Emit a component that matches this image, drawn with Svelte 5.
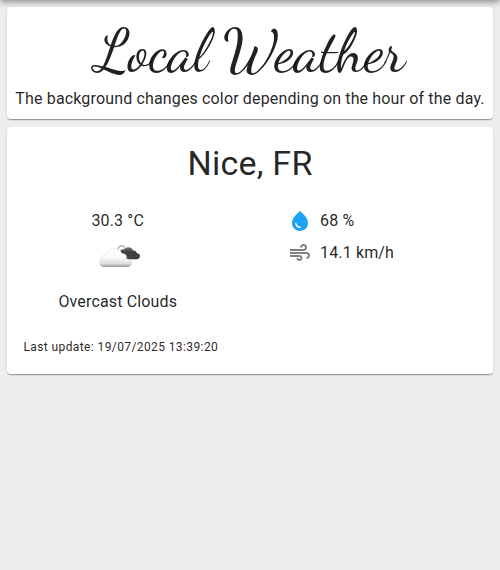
<script>
  const city = 'Nice, FR';
  const updated = '19/07/2025 13:39:20';
</script>

<div class="page">
  <div class="bar"></div>
  <section class="card header">
    <h1>Local Weather</h1>
    <p>The background changes color depending on the hour of the day.</p>
  </section>
  <section class="card weather">
    <h2>{city}</h2>
    <div class="grid">
      <div class="sky">
        <span>30.3 °C</span>
        <svg class="cloud" width="50" height="50" viewBox="0 0 50 50">
          <defs>
            <linearGradient id="light" x1="0" y1="0" x2="0" y2="1">
              <stop offset="0" stop-color="#fff" />
              <stop offset=".5" stop-color="#fafafa" />
              <stop offset=".84" stop-color="#dcdcdc" />
              <stop offset="1" stop-color="#888" />
            </linearGradient>
            <linearGradient id="dark" x1="0" y1="0" x2="0" y2="1">
              <stop offset="0" stop-color="#777" />
              <stop offset=".4" stop-color="#3c3c3c" />
              <stop offset=".8" stop-color="#444" />
              <stop offset="1" stop-color="#333" />
            </linearGradient>
          </defs>
          <path d="M25 19c0-2.800 1.800-4.300 3.700-4.300 1.600 0 2.600.8 3.200 1.800" fill="none" stroke="#999" stroke-width="1.100" />
          <path d="M29 27.500c-2-3-3-5-2-7 .7-2 2.600-2.500 4-2 1.500-3.200 8-3 9 1 2-.4 3.600.6 3.600 2.600 3 .4 4 2.200 3.200 4-.4 1.700-1.800 2.200-3.500 2.200H33z" fill="url(#dark)" />
          <path d="M12 36c-3.500 0-5.500-1.500-5.500-4.100s1.500-4.200 3.400-4.500c-1-3.200 1.200-5.200 3.900-4.700 1.200-3.600 4.200-5.600 7.500-5.400 3.800.2 6.700 2.400 7.600 5.300 3.400-.5 5.300 2.100 4.500 5.100 3 .2 5.200 1.800 5.200 4.200 0 2.600-2 4.100-5 4.100z" fill="url(#light)" stroke="#d2d2d2" stroke-width=".4" />
        </svg>
        <span class="label">Overcast Clouds</span>
      </div>
      <div class="stats">
        <div class="row">
          <svg width="24" height="24" viewBox="0 0 24 24" fill="#1da1f2"><path d="M12 2c-5.330 4.550-8 8.480-8 11.800 0 4.980 3.800 8.200 8 8.200s8-3.220 8-8.200c0-3.320-2.670-7.250-8-11.800zM7.830 14c.37 0 .67.26.74.62.41 2.220 2.280 2.980 3.640 2.870.43-.02.79.32.79.75 0 .4-.32.73-.72.75-2.130.13-4.620-1.090-5.190-4.120-.08-.45.28-.87.74-.87z" /></svg>
          <span>68 %</span>
        </div>
        <div class="row">
          <svg width="24" height="24" viewBox="0 0 24 24" fill="#808080"><path d="M14.500 17c0 1.650-1.350 3-3 3s-3-1.350-3-3h2c0 .55.45 1 1 1s1-.45 1-1-.45-1-1-1H2v-2h9.500c1.650 0 3 1.350 3 3zM19 6.500C19 4.570 17.430 3 15.500 3S12 4.570 12 6.500h2c0-.83.67-1.500 1.500-1.500s1.500.67 1.500 1.500S16.330 8 15.500 8H2v2h13.500c1.930 0 3.500-1.570 3.500-3.500zm-.5 4.500H2v2h16.500c.83 0 1.500.67 1.500 1.500s-.67 1.500-1.500 1.500v2c1.930 0 3.500-1.570 3.500-3.500S20.430 11 18.500 11z" /></svg>
          <span>14.1 km/h</span>
        </div>
      </div>
    </div>
    <small>Last update: {updated}</small>
  </section>
</div>

<style>
  :global(body) { margin: 0; background: #eee; }
  .page {
    box-sizing: border-box;
    height: 570px;
    padding: 7px;
    position: relative;
    overflow: hidden;
    background: #eee;
    color: rgba(0, 0, 0, 0.87);
    font: 400 16px/24px Roboto, sans-serif;
    letter-spacing: 0.15px;
  }
  .bar {
    position: absolute;
    top: -64px;
    left: 0;
    width: 100%;
    height: 64px;
    box-shadow: 0 2px 4px -1px rgba(0, 0, 0, 0.2), 0 4px 5px rgba(0, 0, 0, 0.14), 0 1px 10px rgba(0, 0, 0, 0.12);
  }
  .card {
    box-sizing: border-box;
    position: relative;
    background: #fff;
    border-radius: 4px;
    box-shadow: 0 2px 1px -1px rgba(0, 0, 0, 0.2), 0 1px 1px rgba(0, 0, 0, 0.14), 0 1px 3px rgba(0, 0, 0, 0.12);
  }
  h1, h2, p { margin: 0; font-weight: 400; }
  .header { height: 112px; padding: 8px; text-align: center; }
  h1 {
    font: 400 60px/72px 'Dancing Script', 'Liberation Serif', cursive;
    letter-spacing: -0.5px;
    white-space: nowrap;
  }
  p { white-space: nowrap; }
  .weather { height: 247px; margin-top: 8px; padding: 16px; }
  h2 { font-size: 34px; line-height: 41px; letter-spacing: 0.25px; text-align: center; }
  .grid { display: grid; grid-template-columns: 1fr 1fr; margin-top: 25px; }
  .sky { display: flex; flex-direction: column; align-items: center; padding-right: 37.500px; }
  .cloud { display: block; margin-top: -2px; }
  .label { margin-top: 9px; }
  .stats { padding-left: 38px; }
  .row { display: flex; align-items: center; gap: 8px; height: 24px; margin-bottom: 8px; }
  small { display: block; margin-top: 23px; padding-left: 0.4px; font-size: 12px; line-height: 20px; letter-spacing: 0.4px; }
</style>
